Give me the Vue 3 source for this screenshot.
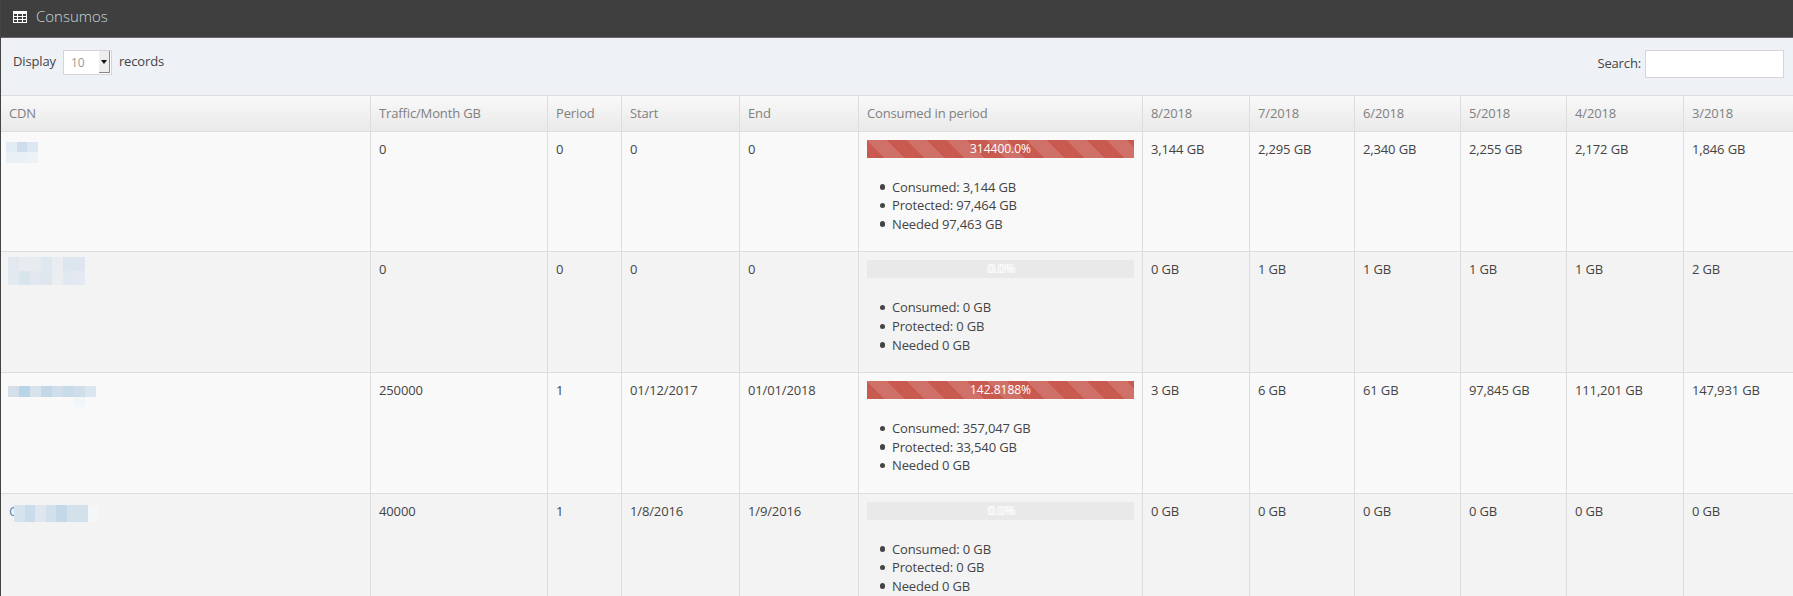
<script setup>
const columns = [
  { label: 'CDN', width: 369 }, { label: 'Traffic/Month GB', width: 177 }, { label: 'Period', width: 74 },
  { label: 'Start', width: 118 }, { label: 'End', width: 119 }, { label: 'Consumed in period', width: 284 },
  { label: '8/2018', width: 107 }, { label: '7/2018', width: 105 }, { label: '6/2018', width: 106 },
  { label: '5/2018', width: 106 }, { label: '4/2018', width: 117 }, { label: '3/2018', width: 110 },
]
const rows = [
  {
    traffic: '0', period: '0', start: '0', end: '0', pct: '314400.0%', over: true,
    consumed: '3,144 GB', protectedGb: '97,464 GB', needed: '97,463 GB',
    months: ['3,144 GB', '2,295 GB', '2,340 GB', '2,255 GB', '2,172 GB', '1,846 GB'],
    mosaic: { cls: 'm1', cells: ['#e3ecf4', '#cfdcea', '#dce7f2', '#eaf0f5', '#e9f1f6', '#edf2f6'] },
  },
  {
    traffic: '0', period: '0', start: '0', end: '0', pct: '0.0%', over: false,
    consumed: '0 GB', protectedGb: '0 GB', needed: '0 GB',
    months: ['0 GB', '1 GB', '1 GB', '1 GB', '1 GB', '2 GB'],
    mosaic: { cls: 'm2', cells: ['#e1e8ef', '#e8ecf0', '#e6ebef', '#dfe8ef', '#e9edf1', '#dde6ee', '#dde6ee', '#e2e9ef', '#d9e5ed', '#e3e8f0', '#dfe7ee', '#ebeef1', '#e0e8f0', '#e4e9f1'] },
  },
  {
    traffic: '250000', period: '1', start: '01/12/2017', end: '01/01/2018', pct: '142.8188%', over: true,
    consumed: '357,047 GB', protectedGb: '33,540 GB', needed: '0 GB',
    months: ['3 GB', '6 GB', '61 GB', '97,845 GB', '111,201 GB', '147,931 GB'],
    mosaic: { cls: 'm3', cells: ['#d5dfea', '#b9d4e7', '#d8e2ec', '#c2d8e9', '#cfdeea', '#c7dbe9', '#d0deea', '#dbe6f0', 'transparent', 'transparent', 'transparent', 'transparent', 'transparent', 'transparent', '#f3f6f8', 'transparent'] },
  },
  {
    traffic: '40000', period: '1', start: '1/8/2016', end: '1/9/2016', pct: '0.0%', over: false,
    consumed: '0 GB', protectedGb: '0 GB', needed: '0 GB',
    months: ['0 GB', '0 GB', '0 GB', '0 GB', '0 GB', '0 GB'],
    letter: 'C',
    mosaic: { cls: 'm4', cells: ['#d6e3ed', '#c9dcea', '#e0e6ef', '#d2e0eb', '#c4d9e8', '#d3e1eb', '#d3e1eb', '#f5f6f8'] },
  },
]
</script>

<template>
  <div class="panel">
    <header class="titlebar">
      <svg class="table-icon" width="14" height="12" viewBox="0 0 14 12" aria-hidden="true">
        <path fill="#fff" fill-rule="evenodd" d="M0 0h14v12H0z M1 3v2h3V3z M5 3v2h4V3z M10 3v2h3V3z M1 6v2h3V6z M5 6v2h4V6z M10 6v2h3V6z M1 9v2h3V9z M5 9v2h4V9z M10 9v2h3V9z" />
      </svg>
      <span class="title">Consumos</span>
    </header>
    <div class="toolbar">
      <div class="length">
        <span>Display</span>
        <div class="fake-select">
          <span class="select-value">10</span>
          <span class="select-button"><i class="caret"></i></span>
        </div>
        <span>records</span>
      </div>
      <label class="search">
        <span>Search:</span>
        <input type="text" />
      </label>
    </div>
    <table class="grid">
      <colgroup>
        <col v-for="c in columns" :key="c.label" :style="{ width: c.width + 'px' }" />
      </colgroup>
      <thead>
        <tr>
          <th v-for="c in columns" :key="c.label">{{ c.label }}</th>
        </tr>
      </thead>
      <tbody>
        <tr v-for="(r, i) in rows" :key="i">
          <td class="name-cell">
            <div class="name">
              <span v-if="r.letter" class="letter">{{ r.letter }}</span>
              <div class="mosaic" :class="r.mosaic.cls">
                <span v-for="(color, j) in r.mosaic.cells" :key="j" :style="{ background: color }"></span>
              </div>
            </div>
          </td>
          <td>{{ r.traffic }}</td>
          <td>{{ r.period }}</td>
          <td>{{ r.start }}</td>
          <td>{{ r.end }}</td>
          <td>
            <div class="progress" :class="{ over: r.over }">
              <span v-if="r.over">{{ r.pct }}</span>
              <span v-else class="zero">0.0%<b>0.0%</b></span>
            </div>
            <ul>
              <li>Consumed: {{ r.consumed }}</li>
              <li>Protected: {{ r.protectedGb }}</li>
              <li>Needed {{ r.needed }}</li>
            </ul>
          </td>
          <td v-for="(m, k) in r.months" :key="k">{{ m }}</td>
        </tr>
      </tbody>
    </table>
  </div>
</template>

<style>
html, body { margin: 0; overflow: hidden; background: #fff; }
</style>

<style scoped>
.panel {
  height: 596px;
  overflow: hidden;
  border-left: 1px solid #444;
  box-sizing: border-box;
  font-family: "Open Sans", "Noto Sans", sans-serif;
  font-size: 13px;
  line-height: 18.57px;
  letter-spacing: -0.14px;
  color: #444;
}
.titlebar {
  height: 37px;
  margin-left: -1px;
  background: #3f3f3f;
  border-bottom: 1px solid #666;
  display: flex;
  align-items: center;
  padding-left: 13px;
  gap: 9px;
}
.table-icon { display: block; margin-top: -3px; }
.title { color: #c8d8dd; font-size: 15px; font-weight: 300; letter-spacing: 0; margin-top: -4px; }
.toolbar {
  height: 57px;
  box-sizing: border-box;
  background: #eef1f6;
  display: flex;
  justify-content: space-between;
  padding: 12px 9px 0 12px;
}
.length { display: flex; align-items: flex-start; gap: 7px; }
.length > span { line-height: 23px; }
.fake-select {
  width: 47px;
  height: 23px;
  background: #fff;
  border: 1px solid #d5d5d5;
  display: flex;
  justify-content: space-between;
}
.select-value { color: #999; padding-left: 7px; line-height: 23px; font-size: 12px; }
.select-button {
  width: 10px;
  height: 21px;
  margin: 0 1px 0 0;
  background: #eee;
  border-right: 1px solid #888;
  border-bottom: 1px solid #888;
  display: flex;
  align-items: center;
  justify-content: center;
}
.caret {
  width: 0;
  height: 0;
  border-left: 3px solid transparent;
  border-right: 3px solid transparent;
  border-top: 4px solid #111;
}
.search { display: flex; align-items: flex-start; gap: 4px; }
.search span { line-height: 26px; }
.search input {
  width: 139px;
  height: 28px;
  box-sizing: border-box;
  border: 1px solid #d5d5d5;
  background: #fff;
  padding: 0;
  margin: 0;
}
.grid {
  width: 1792px;
  table-layout: fixed;
  border-collapse: separate;
  border-spacing: 0;
}
th {
  height: 35.75px;
  box-sizing: border-box;
  padding: 0 8px;
  text-align: left;
  font-weight: 400;
  color: #808080;
  background: linear-gradient(to bottom, #f9f9f9, #e9e9e9);
  border-top: 1px solid #ddd;
  border-left: 1px solid #ddd;
}
th:first-child, td:first-child { border-left: 0; }
td {
  vertical-align: top;
  padding: 8px;
  border-top: 1px solid #ddd;
  border-left: 1px solid #ddd;
  background: #f9f9f9;
}
tbody tr:nth-child(even) td { background: #f3f3f3; }
.name { position: relative; height: 40px; }
.letter { color: #428bca; }
.mosaic { display: grid; position: absolute; }
.m1 { grid-template-columns: repeat(3, 10.5px); grid-auto-rows: 10.5px; left: -3px; top: 2px; }
.m2 { grid-template-columns: repeat(7, 11px); grid-auto-rows: 14px; left: -1px; top: -3px; }
.m3 { grid-template-columns: repeat(8, 11px); grid-auto-rows: 10.5px; left: -1px; top: 5px; }
.m4 { grid-template-columns: repeat(7, 10.5px) 10px; grid-auto-rows: 17px; left: 5px; top: 3px; }
.progress {
  height: 18px;
  line-height: 18px;
  margin-bottom: 20px;
  background: #e9e9e9;
  color: #fff;
  text-align: center;
  font-size: 12px;
  letter-spacing: 0;
}
.progress.over {
  background-color: #c85a50;
  background-image: linear-gradient(45deg,
    rgba(255, 255, 255, .14) 25%, transparent 25%, transparent 50%,
    rgba(255, 255, 255, .14) 50%, rgba(255, 255, 255, .14) 75%, transparent 75%);
  background-size: 40px 40px;
}
.zero { position: relative; opacity: .9; }
.zero b { position: absolute; left: 2px; top: 0; font-weight: 400; }
ul { margin: 0 0 10px; padding: 0 0 0 25px; list-style: none; }
li { position: relative; }
li::before {
  content: "";
  position: absolute;
  left: -12.5px;
  top: 6.5px;
  width: 5.5px;
  height: 5.5px;
  border-radius: 50%;
  background: #444;
}
</style>
